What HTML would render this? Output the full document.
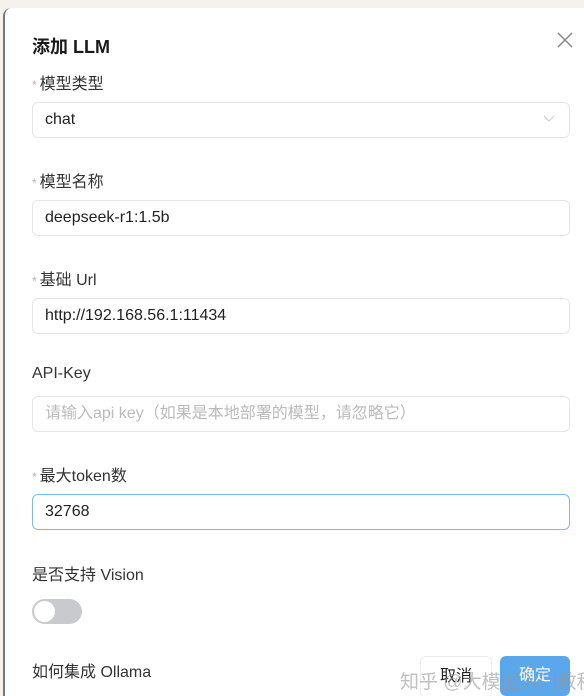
<!DOCTYPE html>
<html><head><meta charset="utf-8"><style>
html,body{margin:0;width:584px;height:696px;overflow:hidden}
body{background:#f5f2ee;font-family:"Liberation Sans","Noto Sans CJK SC",sans-serif;color:#222;position:relative}
.dlg{position:absolute;left:3px;top:8px;width:600px;height:720px;background:#fff;border-radius:8px;border-left:2px solid #777}
.a{position:absolute;white-space:nowrap}
.t{font-size:18px;font-weight:bold;left:32px;top:33px;color:#1a1a1a}
.lab{font-size:16px;left:32px;color:#333}
.lab i{font-style:normal;color:#d9a0a0;font-size:12px;margin-right:3px}
.in{left:32px;height:34px;border:1px solid #e6e6e6;border-radius:6px;font-size:16px;line-height:34px;padding-left:12px;width:524px;color:#222}
</style></head><body>
<div class="dlg"></div>
<div class="a t">添加 LLM</div>
<svg class="a" style="left:557px;top:32px" width="16" height="16"><path d="M1 1L15 15M15 1L1 15" stroke="#888" stroke-width="1.5"/></svg>
<div class="a lab" style="top:70px"><i>*</i>模型类型</div>
<div class="a in" style="top:102px">chat</div>
<svg class="a" style="left:543px;top:115px" width="12" height="8"><path d="M1 1L6 6L11 1" stroke="#ccc" fill="none"/></svg>
<div class="a lab" style="top:168px"><i>*</i>模型名称</div>
<div class="a in" style="top:200px">deepseek-r1:1.5b</div>
<div class="a lab" style="top:266px"><i>*</i>基础 Url</div>
<div class="a in" style="top:298px">http://192.168.56.1:11434</div>
<div class="a lab" style="top:365px">API-Key</div>
<div class="a in" style="top:396px;color:#bbb">请输入api key（如果是本地部署的模型，请忽略它）</div>
<div class="a lab" style="top:462px"><i>*</i>最大token数</div>
<div class="a in" style="top:494px;border-color:#7fb8e8">32768</div>
<div class="a lab" style="top:561px">是否支持 Vision</div>
<div class="a" style="left:32px;top:599px;width:50px;height:25px;border-radius:13px;background:#c8cacd"></div>
<div class="a" style="left:34px;top:601px;width:21px;height:21px;border-radius:50%;background:#fff"></div>
<div class="a lab" style="top:658px">如何集成 Ollama</div>
<div class="a" style="left:420px;top:656px;width:70px;height:40px;border:1px solid #eee;border-radius:6px;font-size:16px;line-height:40px;text-align:center;background:#fff">取消</div>
<div class="a" style="left:500px;top:656px;width:70px;height:40px;border-radius:6px;background:#5aa7ec;color:#fff;font-size:16px;line-height:40px;text-align:center">确定</div>
<div class="a" style="left:400px;top:667px;font-size:19px;color:rgba(150,150,150,.6)">知乎 @大模型入门教程</div>
</body></html>
